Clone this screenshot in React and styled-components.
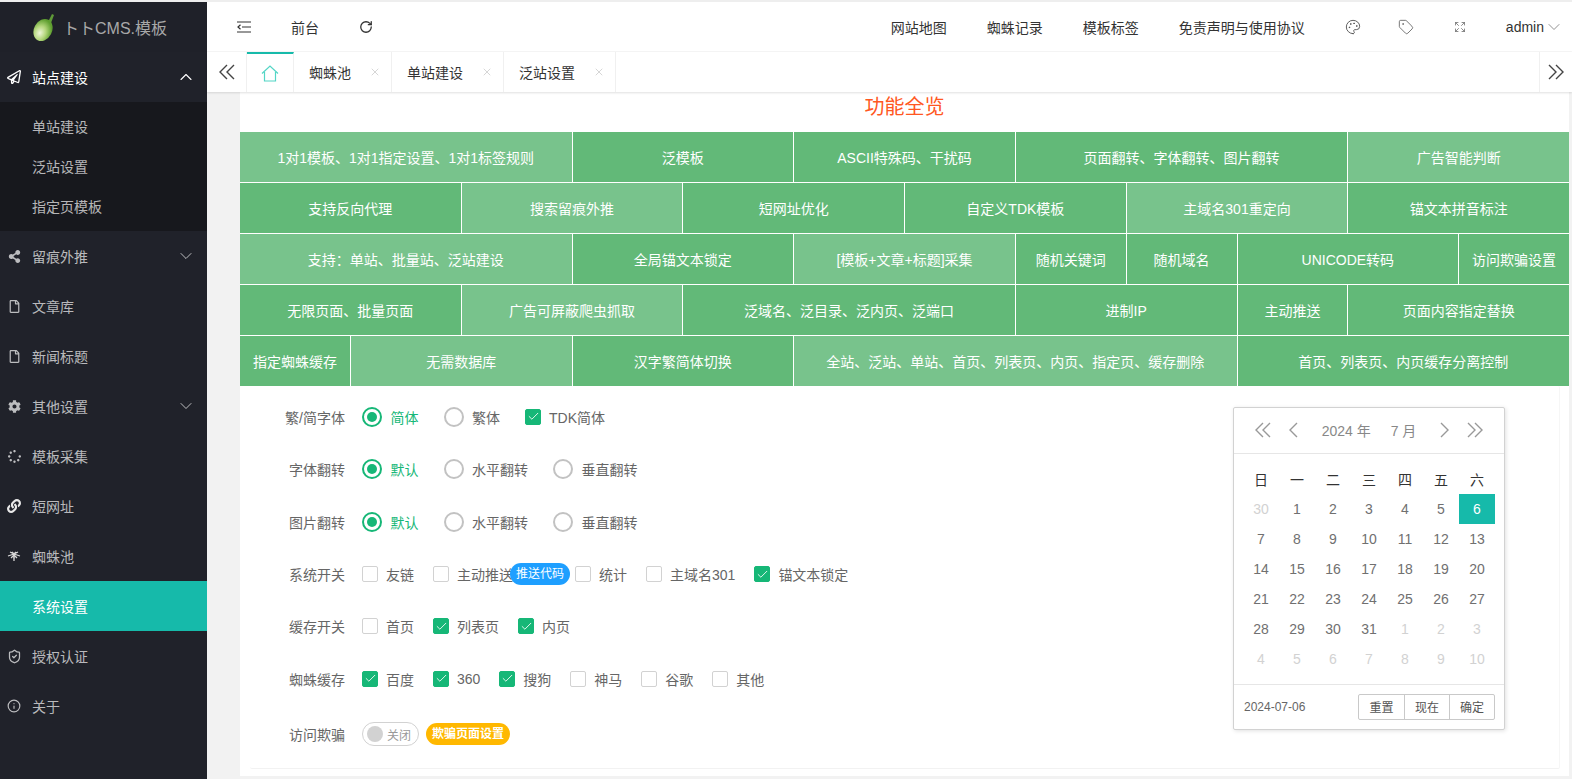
import React from 'react';
import styled, { createGlobalStyle } from 'styled-components';
import {
	ChevronDown,
	ChevronUp,
	Check,
	Expand,
	Info,
	Palette,
	RotateCw,
	ShieldCheck,
	Tag,
	X,
} from 'lucide-react';
import { FaCog, FaLink, FaRegFile, FaRegPaperPlane, FaShareAlt, FaSpinner } from 'react-icons/fa';

const TEAL = '#16baaa';
const GREEN = '#16b777';

const GlobalStyle = createGlobalStyle`
	html, body {
		margin: 0;
		padding: 0;
		height: 100%;
		overflow: hidden;
	}
	body {
		font-family: "Liberation Sans", "Noto Sans CJK SC", sans-serif;
		font-size: 14px;
		color: #666;
	}
	* {
		box-sizing: border-box;
	}
`;

const FruitLogo = () => (
	<svg width="26" height="30" viewBox="0 0 26 30">
		<defs>
			<radialGradient id="fruit" cx="42%" cy="68%" r="62%">
				<stop offset="0%" stopColor="#eef5d8" />
				<stop offset="50%" stopColor="#b4d67c" />
				<stop offset="100%" stopColor="#5f9f30" />
			</radialGradient>
		</defs>
		<path d="M16 10 L20 2 L22 3 L19 11 Z" fill="#5f9a38" />
		<ellipse cx="11" cy="18" rx="9" ry="11.5" transform="rotate(28 11 18)" fill="url(#fruit)" />
	</svg>
);

const SpiderIcon = () => (
	<svg width="14" height="14" viewBox="0 0 14 14" fill="none" stroke="#d8d8d8" strokeWidth="1.3">
		<path d="M7 5 L1 7 M7 5 L3 3 M7 5 L5 3 M7 5 L9 3 M7 5 L11 3 M7 5 L13 7 M7 6 L4 9 M7 6 L10 9" />
		<path d="M6 4 H8 L7.6 12 H6.4 Z" fill="#d8d8d8" stroke="none" />
	</svg>
);

const ShrinkIcon = () => (
	<svg width="14" height="14" viewBox="0 0 14 14" fill="none" stroke="#333" strokeWidth="1.2">
		<path d="M0 2 H14 M5 7 H14 M0 12 H14" />
		<path d="M3.5 4.8 L1 7 L3.5 9.2" />
	</svg>
);

const HomeIcon = () => (
	<svg width="18" height="17" viewBox="0 0 18 17" fill="none" stroke="#53d5c5" strokeWidth="1.2">
		<path d="M1 8.5 L9 1 L17 8.5" />
		<path d="M3.5 7 V16 H14.5 V7" />
	</svg>
);

// taller than the lucide chevrons, closer to the picture
const DoubleArrow = ({ right, color }) => (
	<svg width="16" height="16" viewBox="0 0 16 16" fill="none" stroke={color} strokeWidth="1.4">
		<path d={right ? 'M1 1 L8 8 L1 15 M8 1 L15 8 L8 15' : 'M8 1 L1 8 L8 15 M15 1 L8 8 L15 15'} />
	</svg>
);

const SingleArrow = ({ right }) => (
	<svg width="9" height="16" viewBox="0 0 9 16" fill="none" stroke="#999" strokeWidth="1.4">
		<path d={right ? 'M1 1 L8 8 L1 15' : 'M8 1 L1 8 L8 15'} />
	</svg>
);

const Sidebar = () => (
	<Side>
		<Brand>
			<FruitLogo />
			<BrandName>トトCMS.模板</BrandName>
		</Brand>
		<MenuItem $bright>
			<MenuIcon><FaRegPaperPlane size={14} /></MenuIcon>
			站点建设
			<MenuArrow><ChevronUp size={20} strokeWidth={1.3} /></MenuArrow>
		</MenuItem>
		<SubMenu>
			<SubItem>单站建设</SubItem>
			<SubItem>泛站设置</SubItem>
			<SubItem>指定页模板</SubItem>
		</SubMenu>
		<MenuItem>
			<MenuIcon><FaShareAlt size={13} /></MenuIcon>
			留痕外推
			<MenuArrow><ChevronDown size={20} strokeWidth={1.2} /></MenuArrow>
		</MenuItem>
		<MenuItem>
			<MenuIcon><FaRegFile size={13} /></MenuIcon>
			文章库
		</MenuItem>
		<MenuItem>
			<MenuIcon><FaRegFile size={13} /></MenuIcon>
			新闻标题
		</MenuItem>
		<MenuItem>
			<MenuIcon><FaCog size={13} /></MenuIcon>
			其他设置
			<MenuArrow><ChevronDown size={20} strokeWidth={1.2} /></MenuArrow>
		</MenuItem>
		<MenuItem>
			<MenuIcon><FaSpinner size={13} /></MenuIcon>
			模板采集
		</MenuItem>
		<MenuItem>
			<MenuIcon><FaLink size={14} color="#e8e8e8" /></MenuIcon>
			短网址
		</MenuItem>
		<MenuItem>
			<MenuIcon><SpiderIcon /></MenuIcon>
			蜘蛛池
		</MenuItem>
		<MenuItem $active>系统设置</MenuItem>
		<MenuItem>
			<MenuIcon><ShieldCheck size={15} /></MenuIcon>
			授权认证
		</MenuItem>
		<MenuItem>
			<MenuIcon><Info size={14} /></MenuIcon>
			关于
		</MenuItem>
	</Side>
);

const TopBar = () => (
	<Header>
		<HeaderGroup>
			<ShrinkIcon />
			<NavLink>前台</NavLink>
			<RotateCw size={14} color="#333" strokeWidth={2.2} />
		</HeaderGroup>
		<HeaderGroup>
			<NavLink>网站地图</NavLink>
			<NavLink>蜘蛛记录</NavLink>
			<NavLink>模板标签</NavLink>
			<NavLink>免责声明与使用协议</NavLink>
			<PaletteSlot>
				<Palette size={16} color="#555" strokeWidth={1.4} />
			</PaletteSlot>
			<Tag size={16} color="#555" strokeWidth={1.2} />
			<Expand size={12} color="#666" strokeWidth={1.5} />
			<User>
				admin
				<ChevronDown size={20} color="#888" strokeWidth={1.1} />
			</User>
		</HeaderGroup>
	</Header>
);

const TABS = ['蜘蛛池', '单站建设', '泛站设置'];

const TabBar = () => (
	<Tabs>
		<TabArrow>
			<DoubleArrow color="#444" />
		</TabArrow>
		<HomeTab>
			<HomeIcon />
		</HomeTab>
		{TABS.map((t) => (
			<TabItem key={t}>
				{t}
				<X size={12} color="#c8c8c8" strokeWidth={1.5} />
			</TabItem>
		))}
		<TabArrow $right>
			<DoubleArrow right color="#444" />
		</TabArrow>
	</Tabs>
);

const FEATURES = [
	['1对1模板、1对1指定设置、1对1标签规则', 3, 1],
	['泛模板', 2],
	['ASCII特殊码、干扰码', 2],
	['页面翻转、字体翻转、图片翻转', 3],
	['广告智能判断', 2, 1],
	['支持反向代理', 2],
	['搜索留痕外推', 2, 1],
	['短网址优化', 2],
	['自定义TDK模板', 2],
	['主域名301重定向', 2, 1],
	['锚文本拼音标注', 2],
	['支持：单站、批量站、泛站建设', 3, 1],
	['全局锚文本锁定', 2],
	['[模板+文章+标题]采集', 2, 1],
	['随机关键词', 1],
	['随机域名', 1],
	['UNICODE转码', 2],
	['访问欺骗设置', 1],
	['无限页面、批量页面', 2],
	['广告可屏蔽爬虫抓取', 2, 1],
	['泛域名、泛目录、泛内页、泛端口', 3],
	['进制IP', 2],
	['主动推送', 1],
	['页面内容指定替换', 2],
	['指定蜘蛛缓存', 1],
	['无需数据库', 2, 1],
	['汉字繁简体切换', 2],
	['全站、泛站、单站、首页、列表页、内页、指定页、缓存删除', 4, 1],
	['首页、列表页、内页缓存分离控制', 3],
];

const Radios = ({ options }) => (
	<>
		{options.map((o, i) => (
			<RadioItem key={o}>
				<RadioRing $on={i === 0} />
				<OptionText $on={i === 0}>{o}</OptionText>
			</RadioItem>
		))}
	</>
);

const Checks = ({ options }) => (
	<>
		{options.map(([name, on]) => (
			<CheckItem key={name}>
				<CheckBox $on={on}>{on && <Check size={13} color="#fff" strokeWidth={1.6} />}</CheckBox>
				{name}
			</CheckItem>
		))}
	</>
);

const SettingsForm = () => (
	<Form>
		<FormRow>
			<FormLabel>繁/简字体</FormLabel>
			<Radios options={['简体', '繁体']} />
			<CheckItem>
				<CheckBox $on><Check size={13} color="#fff" strokeWidth={1.6} /></CheckBox>
				TDK简体
			</CheckItem>
		</FormRow>
		<FormRow>
			<FormLabel>字体翻转</FormLabel>
			<Radios options={['默认', '水平翻转', '垂直翻转']} />
		</FormRow>
		<FormRow>
			<FormLabel>图片翻转</FormLabel>
			<Radios options={['默认', '水平翻转', '垂直翻转']} />
		</FormRow>
		<FormRow>
			<FormLabel>系统开关</FormLabel>
			<Checks options={[['友链', false]]} />
			<CheckItem $tight>
				<CheckBox />
				主动推送
			</CheckItem>
			<PushPill>推送代码</PushPill>
			<Checks options={[['统计', false], ['主域名301', false], ['锚文本锁定', true]]} />
		</FormRow>
		<FormRow>
			<FormLabel>缓存开关</FormLabel>
			<Checks options={[['首页', false], ['列表页', true], ['内页', true]]} />
		</FormRow>
		<FormRow>
			<FormLabel>蜘蛛缓存</FormLabel>
			<Checks
				options={[
					['百度', true],
					['360', true],
					['搜狗', true],
					['神马', false],
					['谷歌', false],
					['其他', false],
				]}
			/>
		</FormRow>
		<FormRow $last>
			<FormLabel>访问欺骗</FormLabel>
			<Switch>
				<SwitchKnob />
				关闭
			</Switch>
			<WarnPill>欺骗页面设置</WarnPill>
		</FormRow>
	</Form>
);

const WEEK = ['日', '一', '二', '三', '四', '五', '六'];
const DAYS = [
	[30, 1], [1], [2], [3], [4], [5], [6, 0, 1],
	[7], [8], [9], [10], [11], [12], [13],
	[14], [15], [16], [17], [18], [19], [20],
	[21], [22], [23], [24], [25], [26], [27],
	[28], [29], [30], [31], [1, 1], [2, 1], [3, 1],
	[4, 1], [5, 1], [6, 1], [7, 1], [8, 1], [9, 1], [10, 1],
];

const Calendar = () => (
	<Cal>
		<CalHead>
			<DoubleArrow color="#999" />
			<SingleArrow />
			<CalTitle>
				<span>2024 年</span>
				<span>7 月</span>
			</CalTitle>
			<SingleArrow right />
			<DoubleArrow right color="#999" />
		</CalHead>
		<CalGrid>
			{WEEK.map((w) => (
				<WeekCell key={w}>{w}</WeekCell>
			))}
			{DAYS.map(([d, muted, selected], i) => (
				<DayCell key={i} $muted={muted} $selected={selected}>
					{d}
				</DayCell>
			))}
		</CalGrid>
		<CalFoot>
			<CalDate>2024-07-06</CalDate>
			<CalButtons>
				<CalButton>重置</CalButton>
				<CalButton>现在</CalButton>
				<CalButton>确定</CalButton>
			</CalButtons>
		</CalFoot>
	</Cal>
);

export default function App() {
	return (
		<>
			<GlobalStyle />
			<Page>
				<Sidebar />
				<Main>
					<TopBar />
					<TabBar />
					<Content>
						<Card>
							<Title>功能全览</Title>
							<FeatureGrid>
								{FEATURES.map(([text, span, light]) => (
									<Feature key={text} $span={span} $light={light}>
										{text}
									</Feature>
								))}
							</FeatureGrid>
							<Panel>
								<SettingsForm />
								<Calendar />
							</Panel>
						</Card>
					</Content>
				</Main>
			</Page>
		</>
	);
}

const Page = styled.div`
	display: flex;
	height: 100vh;
	padding-top: 2px;
	background: #eee;
	overflow: hidden;
`;
const Side = styled.aside`
	width: 207px;
	flex-shrink: 0;
	background: #20222a;
	color: rgba(255, 255, 255, 0.7);
`;
const Brand = styled.div`
	height: 50px;
	padding: 0 0 0 32px;
	display: flex;
	align-items: center;
	gap: 5px;
	background: #1f2129;
`;
const BrandName = styled.span`
	font-size: 16px;
	color: #a8a8a8;
	white-space: nowrap;
`;
const MenuItem = styled.div`
	height: 50px;
	padding-left: 32px;
	position: relative;
	display: flex;
	align-items: center;
	color: ${(props) => (props.$bright || props.$active ? '#fff' : 'rgba(255, 255, 255, 0.7)')};
	background: ${(props) => (props.$active ? TEAL : 'transparent')};
`;
const MenuIcon = styled.span`
	position: absolute;
	left: 6px;
	width: 16px;
	display: flex;
	justify-content: center;
`;
const MenuArrow = styled.span`
	margin-left: auto;
	margin-right: 11px;
	display: flex;
`;
const SubMenu = styled.div`
	background: #17181d;
	padding: 5px 0 4px;
`;
const SubItem = styled.div`
	height: 40px;
	line-height: 40px;
	padding-left: 32px;
	color: rgba(255, 255, 255, 0.7);
`;
const Main = styled.main`
	flex: 1;
	min-width: 0;
	display: flex;
	flex-direction: column;
`;
const Header = styled.header`
	height: 50px;
	flex-shrink: 0;
	display: flex;
	align-items: center;
	justify-content: space-between;
	padding: 0 8px 0 30px;
	background: #fff;
	border-bottom: 1px solid #f6f6f6;
`;
const HeaderGroup = styled.div`
	display: flex;
	align-items: center;
	gap: 40px;
`;
const NavLink = styled.a`
	color: #333;
	white-space: nowrap;
`;
const PaletteSlot = styled.span`
	display: flex;
	margin-right: -3px;
`;
const User = styled.span`
	display: flex;
	align-items: center;
	color: #333;
`;
const Tabs = styled.div`
	height: 40px;
	flex-shrink: 0;
	display: flex;
	background: #fff;
	box-shadow: 0 1px 2px rgba(0, 0, 0, 0.12);
	position: relative;
`;
const TabArrow = styled.div`
	width: ${(props) => (props.$right ? '33px' : '40px')};
	margin-left: ${(props) => (props.$right ? 'auto' : '0')};
	display: flex;
	align-items: center;
	justify-content: center;
	border-left: ${(props) => (props.$right ? '1px solid #f0f0f0' : 'none')};
	border-right: ${(props) => (props.$right ? 'none' : '1px solid #f0f0f0')};
`;
const HomeTab = styled.div`
	width: 47px;
	display: flex;
	align-items: center;
	justify-content: center;
	border-top: 2px solid ${TEAL};
	border-right: 1px solid #f0f0f0;
`;
const TabItem = styled.div`
	display: flex;
	align-items: center;
	gap: 18px;
	padding: 0 10px 0 15px;
	color: #333;
	border-right: 1px solid #f0f0f0;
`;
const Content = styled.div`
	flex: 1;
	min-height: 0;
	padding: 0 3px 3px 33px;
	background: #f2f2f2;
`;
const Card = styled.div`
	height: 100%;
	background: #fff;
	display: flex;
	flex-direction: column;
`;
const Title = styled.h2`
	margin: 0;
	height: 40px;
	padding-top: 2px;
	font-size: 20px;
	line-height: 26px;
	font-weight: normal;
	text-align: center;
	color: #ff5722;
`;
const FeatureGrid = styled.div`
	display: grid;
	grid-template-columns: repeat(12, 1fr);
	grid-auto-rows: 49.95px;
	gap: 1px;
	flex-shrink: 0;
`;
const Feature = styled.div`
	grid-column: span ${(props) => props.$span};
	display: flex;
	align-items: center;
	justify-content: center;
	color: #fff;
	white-space: nowrap;
	background: ${(props) => (props.$light ? '#78c38c' : '#62b978')};
`;
const Panel = styled.section`
	margin: 0 9px 7px 10px;
	flex: 1;
	min-height: 0;
	display: flex;
	justify-content: space-between;
	padding: 5px 54px 0 0;
	border-bottom: 1px solid #f2f2f2;
	border-right: 1px solid #f6f6f6;
	border-radius: 2px;
`;
const Form = styled.div`
	display: grid;
	grid-auto-rows: 52.4px;
	align-content: start;
`;
const FormRow = styled.div`
	display: flex;
	align-items: center;
	margin-top: ${(props) => (props.$last ? '6px' : '0')};
`;
const FormLabel = styled.label`
	width: 95px;
	margin-right: 17px;
	text-align: right;
	color: #666;
	white-space: nowrap;
`;
const RadioItem = styled.span`
	display: flex;
	align-items: center;
	gap: 8.5px;
	margin-right: 25px;
`;
const RadioRing = styled.span`
	width: 20px;
	height: 20px;
	border-radius: 50%;
	border: 2px solid ${(props) => (props.$on ? GREEN : '#c2c2c2')};
	display: flex;
	align-items: center;
	justify-content: center;
	&::after {
		content: '';
		width: 10px;
		height: 10px;
		border-radius: 50%;
		background: ${(props) => (props.$on ? GREEN : 'transparent')};
	}
`;
const OptionText = styled.span`
	color: ${(props) => (props.$on ? GREEN : '#666')};
	white-space: nowrap;
`;
const CheckItem = styled.span`
	display: flex;
	align-items: center;
	gap: 8px;
	margin-right: ${(props) => (props.$tight ? '0' : '19px')};
	color: #666;
	white-space: nowrap;
`;
const CheckBox = styled.span`
	width: 16px;
	height: 16px;
	flex-shrink: 0;
	border-radius: 2px;
	border: 1px solid ${(props) => (props.$on ? GREEN : '#d2d2d2')};
	background: ${(props) => (props.$on ? GREEN : '#fff')};
	display: flex;
	align-items: center;
	justify-content: center;
`;
const PushPill = styled.span`
	height: 22px;
	padding: 0 6px;
	margin: 0 5px 0 -3px;
	border-radius: 11px;
	background: #1e9fff;
	color: #fff;
	font-size: 12px;
	line-height: 22px;
	white-space: nowrap;
`;
const WarnPill = styled.span`
	height: 22px;
	padding: 0 6px;
	border-radius: 11px;
	background: #ffb800;
	color: #fff;
	font-size: 12px;
	font-weight: bold;
	line-height: 22px;
	white-space: nowrap;
`;
const Switch = styled.span`
	width: 57px;
	height: 24px;
	margin-right: 7px;
	padding: 0 4px;
	display: flex;
	align-items: center;
	gap: 4px;
	border: 1px solid #d2d2d2;
	border-radius: 12px;
	font-size: 12px;
	color: #999;
`;
const SwitchKnob = styled.span`
	width: 16px;
	height: 16px;
	flex-shrink: 0;
	border-radius: 50%;
	background: #d2d2d2;
`;
const Cal = styled.div`
	width: 272px;
	height: 323px;
	margin-top: 16px;
	flex-shrink: 0;
	display: flex;
	flex-direction: column;
	background: #fff;
	border: 1px solid #d2d2d2;
	border-radius: 2px;
	box-shadow: 1px 1px 4px rgba(0, 0, 0, 0.12);
`;
const CalHead = styled.div`
	height: 46px;
	flex-shrink: 0;
	padding: 0 21px;
	display: flex;
	align-items: center;
	gap: 18px;
	border-bottom: 1px solid #e6e6e6;
`;
const CalTitle = styled.div`
	flex: 1;
	display: flex;
	justify-content: center;
	gap: 20px;
	color: #888;
`;
const CalGrid = styled.div`
	flex: 1;
	padding: 10px 10px 0 9px;
	display: grid;
	grid-template-columns: repeat(7, 36px);
	grid-auto-rows: 30px;
`;
const WeekCell = styled.div`
	display: flex;
	align-items: center;
	justify-content: center;
	color: #333;
`;
const DayCell = styled.div`
	display: flex;
	align-items: center;
	justify-content: center;
	color: ${(props) => (props.$selected ? '#fff' : props.$muted ? '#d2d2d2' : '#707070')};
	background: ${(props) => (props.$selected ? TEAL : 'transparent')};
`;
const CalFoot = styled.div`
	height: 45px;
	flex-shrink: 0;
	padding: 0 9px 0 10px;
	display: flex;
	align-items: center;
	justify-content: space-between;
	border-top: 1px solid #e6e6e6;
`;
const CalDate = styled.span`
	font-size: 12px;
	color: #666;
`;
const CalButtons = styled.div`
	display: flex;
	border: 1px solid #c9c9c9;
	border-radius: 2px;
`;
const CalButton = styled.span`
	width: 45px;
	height: 24px;
	display: flex;
	align-items: center;
	justify-content: center;
	font-size: 12px;
	color: #555;
	& + & {
		border-left: 1px solid #c9c9c9;
	}
`;
